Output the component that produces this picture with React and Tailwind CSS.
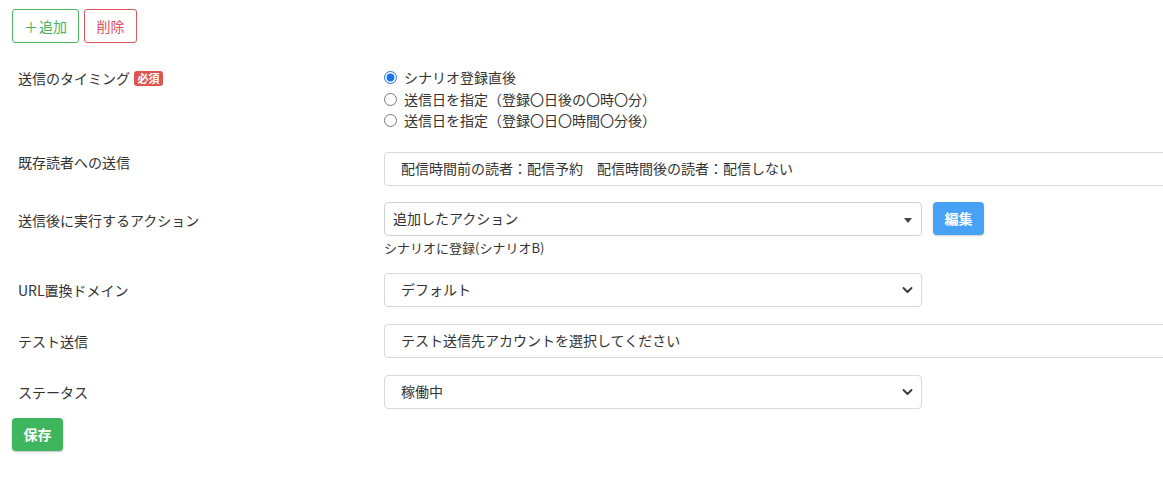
import React from "react";

const Chevron = () => (
  <svg className="absolute right-[8px] top-1/2 -translate-y-1/2" width="11" height="8" viewBox="0 0 16 12">
    <path d="M2 3l6 6 6-6" fill="none" stroke="#343a40" strokeWidth="2.8" strokeLinecap="round" strokeLinejoin="round" />
  </svg>
);

const Label = ({ children, className = "" }) => (
  <div className={`w-[384px] shrink-0 self-start pl-[18px] leading-[21px] ${className}`}>{children}</div>
);

const Radio = ({ checked, children }) => (
  <label className="flex items-center h-[21.5px]">
    <input type="radio" name="timing" defaultChecked={checked} className="m-0 w-[13px] h-[13px] accent-[#1a73e8]" />
    <span className="ml-[7px]">{children}</span>
  </label>
);

export default function App() {
  return (
    <div
      className="w-full min-h-[478px] overflow-hidden bg-white text-[14px] text-[#333333]"
      style={{ fontFamily: '"Noto Sans CJK JP", "Noto Sans", sans-serif' }}
    >
      <div className="flex gap-[5px] pl-[12px] pt-[9px]">
        <button className="h-[34px] w-[67px] rounded-[3px] border border-[#4cb862] text-[#44b25b] leading-none">
          <span className="mr-[1px]">＋</span>追加
        </button>
        <button className="h-[34px] w-[53px] rounded-[3px] border border-[#e0545f] text-[#e0545f] leading-none">
          削除
        </button>
      </div>

      {/* 送信のタイミング */}
      <div className="flex mt-[24px]">
        <Label className="pt-[1px] flex items-center h-[22px]">
          送信のタイミング
          <span className="ml-[4px] inline-flex items-center justify-center h-[15px] w-[29px] rounded-[3px] bg-[#dc5550] text-white text-[11px] font-bold leading-none">
            必須
          </span>
        </Label>
        <div className="flex flex-col">
          <Radio checked>シナリオ登録直後</Radio>
          <Radio>送信日を指定（登録〇日後の〇時〇分）</Radio>
          <Radio>送信日を指定（登録〇日〇時間〇分後）</Radio>
        </div>
      </div>

      {/* 既存読者への送信 */}
      <div className="flex mt-[20px]">
        <Label className="pt-[0px]">既存読者への送信</Label>
        <div className="h-[34px] w-[820px] shrink-0 rounded-[4px] border border-[#d6d8dc] pl-[16px] flex items-center">
          配信時間前の読者：配信予約　配信時間後の読者：配信しない
        </div>
      </div>

      {/* 送信後に実行するアクション */}
      <div className="flex mt-[16px]">
        <Label className="pt-[8px]">送信後に実行するアクション</Label>
        <div className="flex flex-col">
          <div className="flex gap-[11px]">
            <div className="relative h-[34px] w-[538px] rounded-[4px] border border-[#d0d2d6] pl-[8px] flex items-center">
              追加したアクション
              <span className="absolute right-[9px] top-[15px] w-0 h-0 border-l-[4px] border-r-[4px] border-t-[5px] border-l-transparent border-r-transparent border-t-[#444444]" />
            </div>
            <button className="h-[33px] w-[51px] rounded-[4px] bg-[#47a2f5] text-white font-bold shadow-[0_1px_2px_rgba(0,0,0,0.2)] leading-none">
              編集
            </button>
          </div>
          <div className="text-[13px] leading-[21px] mt-px">シナリオに登録(シナリオB)</div>
        </div>
      </div>

      {/* URL置換ドメイン */}
      <div className="flex mt-[15px]">
        <Label className="pt-[7px]">URL置換ドメイン</Label>
        <div className="relative h-[34px] w-[538px] rounded-[4px] border border-[#d6d8dc] pl-[16px] flex items-center">
          デフォルト
          <Chevron />
        </div>
      </div>

      {/* テスト送信 */}
      <div className="flex mt-[17px]">
        <Label className="pt-[7px]">テスト送信</Label>
        <div className="h-[34px] w-[820px] shrink-0 rounded-[4px] border border-[#d6d8dc] pl-[16px] flex items-center">
          テスト送信先アカウントを選択してください
        </div>
      </div>

      {/* ステータス */}
      <div className="flex mt-[17px]">
        <Label className="pt-[7px]">ステータス</Label>
        <div className="relative h-[34px] w-[538px] rounded-[4px] border border-[#d6d8dc] pl-[16px] flex items-center">
          稼働中
          <Chevron />
        </div>
      </div>

      <div className="pl-[12px] mt-[9px]">
        <button className="h-[33px] w-[51px] rounded-[4px] bg-[#3fb65d] text-white font-bold shadow-[0_1px_2px_rgba(0,0,0,0.25)] leading-none">
          保存
        </button>
      </div>
    </div>
  );
}
